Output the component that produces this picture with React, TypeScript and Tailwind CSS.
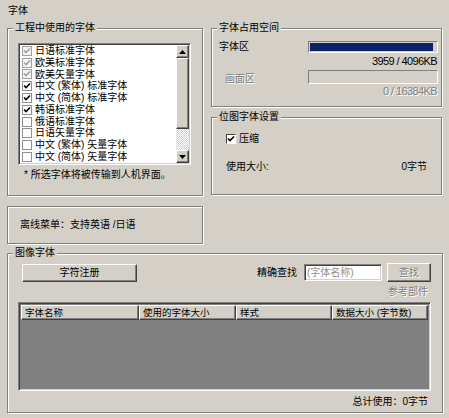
import React from 'react';

const FONT = "font-['Liberation_Sans','Noto_Sans_CJK_SC',sans-serif]";

const raised = 'border border-t-white border-l-white border-r-[#404040] border-b-[#404040] shadow-[inset_-1px_-1px_0_#808080]';
const sunken = 'border border-t-[#808080] border-l-[#808080] border-r-white border-b-white shadow-[inset_1px_1px_0_#404040,inset_-1px_-1px_0_#d4d0c8]';
const disabledText = 'text-[#808080] [text-shadow:1px_1px_0_#fff]';

const fonts = [
  { name: '日语标准字体', state: 'locked' },
  { name: '欧美标准字体', state: 'locked' },
  { name: '欧美矢量字体', state: 'locked' },
  { name: '中文 (繁体) 标准字体', state: 'on' },
  { name: '中文 (简体) 标准字体', state: 'on' },
  { name: '韩语标准字体', state: 'on' },
  { name: '俄语标准字体', state: 'off' },
  { name: '日语矢量字体', state: 'off' },
  { name: '中文 (繁体) 矢量字体', state: 'off' },
  { name: '中文 (简体) 矢量字体', state: 'off' },
];

const Check = ({ color }: { color: string }) => (
  <svg width="8" height="8" viewBox="0 0 8 8">
    <path d="M1 3.5 L3 5.5 L7 1.5" fill="none" stroke={color} strokeWidth="1.6" />
  </svg>
);

const Group: React.FC<{ title?: string; className?: string; children: React.ReactNode }> = ({ title, className, children }) => (
  <div className={`relative border border-[#808080] shadow-[inset_1px_1px_0_#fff,1px_1px_0_#fff] ${className || ''}`}>
    {title && (
      <span className="absolute left-[5px] -top-[8px] px-[2px] bg-[#d4d0c8] leading-[14px] whitespace-nowrap">{title}</span>
    )}
    {children}
  </div>
);

const Arrow = ({ up }: { up?: boolean }) => (
  <svg width="7" height="4" viewBox="0 0 7 4">
    <path d={up ? 'M3.5 0 L7 4 L0 4 Z' : 'M0 0 L7 0 L3.5 4 Z'} fill="#000" />
  </svg>
);

export default function App() {
  return (
    <div className={`w-[449px] h-[418px] bg-[#d4d0c8] px-[7px] pt-[4px] text-[10px] leading-[14px] text-black ${FONT} overflow-hidden`}>
      <div className="pl-[1px]">字体</div>

      <div className="flex gap-[8px] mt-[10px]">
        {/* left group */}
        <Group title="工程中使用的字体" className="w-[196px] h-[168px] pt-[14px] pl-[10px]">
          <div className={`w-[173px] h-[122px] ${sunken} p-[1px] flex`}>
            <div className="flex-1 bg-white overflow-hidden pt-[0px]">
              {fonts.map(f => (
                <div key={f.name} className="h-[11.8px] flex items-center gap-[3px] pl-[2px] whitespace-nowrap">
                  <span className={`w-[10px] h-[10px] border flex items-center justify-center ${f.state === 'locked' ? 'border-[#a0a0a0] bg-[#f4f4f4]' : 'border-[#909090] bg-white'}`}>
                    {f.state === 'locked' && <Check color="#a0a0a0" />}
                    {f.state === 'on' && <Check color="#000" />}
                  </span>
                  <span>{f.name}</span>
                </div>
              ))}
            </div>
            <div className="w-[13px] flex flex-col">
              <div className={`h-[13px] bg-[#d4d0c8] ${raised} flex items-center justify-center`}><Arrow up /></div>
              <div className={`h-[71px] bg-[#d4d0c8] ${raised}`} />
              <div className="flex-1 bg-[repeating-conic-gradient(#fff_0_25%,#d4d0c8_0_50%)] bg-[length:2px_2px]" />
              <div className={`h-[13px] bg-[#d4d0c8] ${raised} flex items-center justify-center`}><Arrow /></div>
            </div>
          </div>
          <div className="mt-[3px] ml-[6px] whitespace-nowrap">* 所选字体将被传输到人机界面。</div>
        </Group>

        {/* right column */}
        <div className="w-[231px] flex flex-col gap-[10px]">
          <Group title="字体占用空间" className="h-[79px] pt-[11px] pl-[7px] pr-[3px]">
            <div className="h-[14px] flex items-center justify-between">
              <span>字体区</span>
              <div className="w-[130px] h-[12px] border border-t-[#808080] border-l-[#808080] border-r-white border-b-white p-[1px]">
                <div className="h-full w-[123px] bg-[#0a246a]" />
              </div>
            </div>
            <div className="h-[14px] text-right pr-[1px] font-['Liberation_Sans',sans-serif] text-[11px] tracking-[-0.6px]">3959 / 4096KB</div>
            <div className="h-[14px] mt-[2px] flex items-start justify-between">
              <span className={`pl-[6px] pt-[2px] ${disabledText}`}>画面区</span>
              <div className="w-[130px] h-[14px] border border-t-[#808080] border-l-[#808080] border-r-white border-b-white" />
            </div>
            <div className={`h-[14px] text-right pr-[1px] font-['Liberation_Sans',sans-serif] text-[11px] tracking-[-0.6px] ${disabledText}`}>0 / 16384KB</div>
          </Group>

          <Group title="位图字体设置" className="h-[78px] pt-[14px] pl-[14px] pr-[14px]">
            <div className="h-[14px] flex items-center gap-[3px]">
              <span className={`w-[10px] h-[10px] bg-white border border-t-[#404040] border-l-[#404040] border-r-white border-b-white flex items-center justify-center`}>
                <Check color="#000" />
              </span>
              <span>压缩</span>
            </div>
            <div className="mt-[14px] h-[14px] flex items-center justify-between">
              <span>使用大小:</span>
              <span>0字节</span>
            </div>
          </Group>
        </div>
      </div>

      {/* offline menu */}
      <Group className="mt-[10px] w-[196px] h-[38px] flex items-center pl-[12px]">
        <span className="whitespace-nowrap">离线菜单：支持英语 /日语</span>
      </Group>

      {/* image fonts */}
      <Group title="图像字体" className="mt-[9px] w-[436px] h-[160px] pt-[9px] pl-[14px] pr-[11px]">
        <div className="h-[19px] flex items-center justify-between">
          <button className={`w-[115px] h-[18px] bg-[#d4d0c8] ${raised} flex items-center justify-center`}>字符注册</button>
          <div className="flex items-center">
            <span className="mr-[7px]">精确查找</span>
            <div className={`w-[78px] h-[17px] bg-white ${sunken} flex items-center pl-[2px] text-[#909090]`}>(字体名称)</div>
            <button className={`ml-[5px] w-[44px] h-[19px] bg-[#d4d0c8] ${raised} flex items-center justify-center ${disabledText}`}>查找</button>
          </div>
        </div>
        <div className={`mt-[3px] h-[14px] text-right mr-[3px] ${disabledText}`}>参考部件</div>
        <div className={`mt-[3px] -ml-[4px] w-[413px] h-[89px] ${sunken} p-[2px] bg-[#808080] flex flex-col`}>
          <div className="h-[15px] flex bg-[#d4d0c8] text-[9.5px]">
            {[
              ['字体名称', 'w-[118px]'],
              ['使用的字体大小', 'w-[97px]'],
              ['样式', 'w-[96px]'],
              ['数据大小 (字节数)', 'flex-1'],
            ].map(([t, w]) => (
              <div key={t} className={`${w} h-full ${raised} flex items-center pl-[3px] whitespace-nowrap overflow-hidden`}>{t}</div>
            ))}
          </div>
        </div>
        <div className="mt-[4px] h-[14px] text-right mr-[3px]">总计使用：0字节</div>
      </Group>
    </div>
  );
}
